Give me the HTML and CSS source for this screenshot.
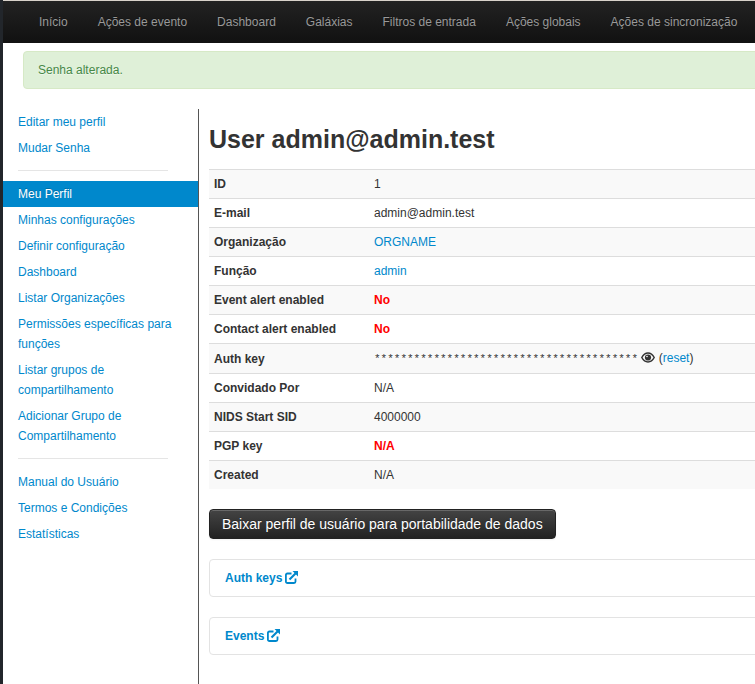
FILE: index.html
```html
<!DOCTYPE html>
<html lang="en">
<head>
    <meta charset="UTF-8">
    <title>User admin@admin.test</title>
    <link rel="stylesheet" href="styles.css">
</head>
<body>

    <!-- Top nav -->
    <nav class="topbar">
        <a href="#">Início</a>
        <a href="#">Ações de evento</a>
        <a href="#">Dashboard</a>
        <a href="#">Galáxias</a>
        <a href="#">Filtros de entrada</a>
        <a href="#">Ações globais</a>
        <a href="#">Ações de sincronização</a>
    </nav>

    <div class="alert">Senha alterada.</div>

    <div class="main">
        <!-- Side menu -->
        <aside class="sidemenu">
            <a href="#">Editar meu perfil</a>
            <a href="#">Mudar Senha</a>
            <div class="divider"></div>
            <a href="#" class="active">Meu Perfil</a>
            <a href="#">Minhas configurações</a>
            <a href="#">Definir configuração</a>
            <a href="#">Dashboard</a>
            <a href="#">Listar Organizações</a>
            <a href="#">Permissões específicas para funções</a>
            <a href="#">Listar grupos de compartilhamento</a>
            <a href="#">Adicionar Grupo de Compartilhamento</a>
            <div class="divider"></div>
            <a href="#">Manual do Usuário</a>
            <a href="#">Termos e Condições</a>
            <a href="#">Estatísticas</a>
        </aside>

        <!-- User details -->
        <section class="content">
            <h2>User admin@admin.test</h2>
            <table class="details">
                <tr><th>ID</th><td>1</td></tr>
                <tr><th>E-mail</th><td>admin@admin.test</td></tr>
                <tr><th>Organização</th><td><a href="#">ORGNAME</a></td></tr>
                <tr><th>Função</th><td><a href="#">admin</a></td></tr>
                <tr><th>Event alert enabled</th><td class="red">No</td></tr>
                <tr><th>Contact alert enabled</th><td class="red">No</td></tr>
                <tr class="tall">
                    <th>Auth key</th>
                    <td>
                        <span class="stars">****************************************</span>
                        <svg class="eye" viewBox="0 0 14 11" width="14" height="11"><path fill="none" stroke="#333" stroke-width="1.500" d="M.8 5.500C2.300 2.700 4.500 1 7 1s4.700 1.700 6.200 4.500C11.700 8.300 9.500 10 7 10S2.300 8.300 .8 5.500z"/><circle cx="7" cy="5.500" r="3.100" fill="#333"/><circle cx="6" cy="4.500" r=".8" fill="#fff"/></svg>
                        (<a href="#">reset</a>)
                    </td>
                </tr>
                <tr><th>Convidado Por</th><td>N/A</td></tr>
                <tr><th>NIDS Start SID</th><td>4000000</td></tr>
                <tr><th>PGP key</th><td class="red">N/A</td></tr>
                <tr><th>Created</th><td>N/A</td></tr>
            </table>

            <a href="#" class="btn-dark">Baixar perfil de usuário para portabilidade de dados</a>

            <div class="panel">
                <a href="#">Auth keys
                    <svg class="ext" viewBox="0 0 13 13" width="13" height="13"><path fill="none" stroke="currentColor" stroke-width="1.800" d="M10.500 7.500v3c0 .9-.6 1.500-1.500 1.500H2.400c-.9 0-1.500-.6-1.500-1.500V4c0-.9.6-1.500 1.500-1.500H6.500"/><path fill="none" stroke="currentColor" stroke-width="2.200" d="M4.500 8.500 11 2"/><path d="M7.500 0H13V5.500Z" fill="currentColor"/></svg>
                </a>
            </div>
            <div class="panel">
                <a href="#">Events
                    <svg class="ext" viewBox="0 0 13 13" width="13" height="13"><path fill="none" stroke="currentColor" stroke-width="1.800" d="M10.500 7.500v3c0 .9-.6 1.500-1.500 1.500H2.400c-.9 0-1.500-.6-1.500-1.500V4c0-.9.6-1.500 1.500-1.500H6.500"/><path fill="none" stroke="currentColor" stroke-width="2.200" d="M4.500 8.500 11 2"/><path d="M7.500 0H13V5.500Z" fill="currentColor"/></svg>
                </a>
            </div>
        </section>
    </div>

</body>
</html>
```

FILE: styles.css
```css
html, body {
    height: 100%;
    overflow: hidden;
}
body {
    margin: 0;
    border-left: 3px solid #22262b;
    font-family: "Liberation Sans", Arial, sans-serif;
    font-size: 12px;
    line-height: 20px;
    color: #333;
    background: #fff;
}
a {
    color: #0088cc;
    text-decoration: none;
}

.topbar {
    display: flex;
    height: 43px;
    box-sizing: border-box;
    padding: 0 3px 0 21px;
    border-top: 1px solid #d8d2ca;
    background: linear-gradient(to bottom, #222222, #111111);
    white-space: nowrap;
}
.topbar a {
    padding: 11px 15px 0;
    color: #999;
    text-shadow: 0 -1px 0 rgba(0, 0, 0, .25);
}

.alert {
    margin: 8px -20px 0 20px;
    height: 38px;
    box-sizing: border-box;
    padding: 8px 14px;
    background: #dff0d8;
    border: 1px solid #d6e9c6;
    border-radius: 4px;
    color: #468847;
    text-shadow: 0 1px 0 rgba(255, 255, 255, .5);
}

.main {
    display: flex;
    margin-top: 20px;
}
.sidemenu {
    width: 196px;
    flex: none;
    box-sizing: border-box;
    height: 575px;
    border-right: 1px solid #555;
}
.sidemenu a {
    display: block;
    padding: 3px 15px;
    text-shadow: 0 1px 0 rgba(255, 255, 255, .5);
}
.sidemenu a.active {
    background: #0088cc;
    color: #fff;
    text-shadow: 0 -1px 0 rgba(0, 0, 0, .2);
}
.divider {
    height: 1px;
    margin: 9px 30px 10px 15px;
    background: #e5e5e5;
}

.content {
    flex: 1;
    padding-left: 10px;
    min-width: 0;
}
h2 {
    margin: 10px 0 10px;
    font-size: 25px;
    line-height: 40px;
    color: #333;
}
.details {
    width: 100%;
    border-collapse: collapse;
    margin-bottom: 20px;
}
.details th, .details td {
    height: 28px;
    padding: 4px 5px;
    box-sizing: border-box;
    border-top: 1px solid #ddd;
    text-align: left;
}
.details th {
    width: 160px;
    font-weight: bold;
}
.details tr:nth-child(odd) th, .details tr:nth-child(odd) td {
    background: #f9f9f9;
}
.details tr.tall th, .details tr.tall td {
    height: 30px;
}
.details td.red {
    color: red;
    font-weight: bold;
}
.stars {
    font-family: "Liberation Mono", monospace;
    font-size: 11px;
}
.eye {
    vertical-align: -1px;
}

.btn-dark {
    display: inline-block;
    padding: 4px 12px;
    font-size: 14px;
    color: #fff;
    text-shadow: 0 -1px 0 rgba(0, 0, 0, .25);
    background: linear-gradient(to bottom, #444444, #222222);
    border: 1px solid #222;
    border-radius: 4px;
    box-shadow: inset 0 1px 0 rgba(255, 255, 255, .2), 0 1px 2px rgba(0, 0, 0, .05);
    margin-bottom: 20px;
}

.panel {
    height: 38px;
    box-sizing: border-box;
    margin-bottom: 20px;
    margin-right: -20px;
    padding: 8px 15px;
    border: 1px solid #e3e3e3;
    border-radius: 4px;
    font-weight: bold;
}
.ext {
    vertical-align: -2px;
    margin-left: -1px;
}
```
